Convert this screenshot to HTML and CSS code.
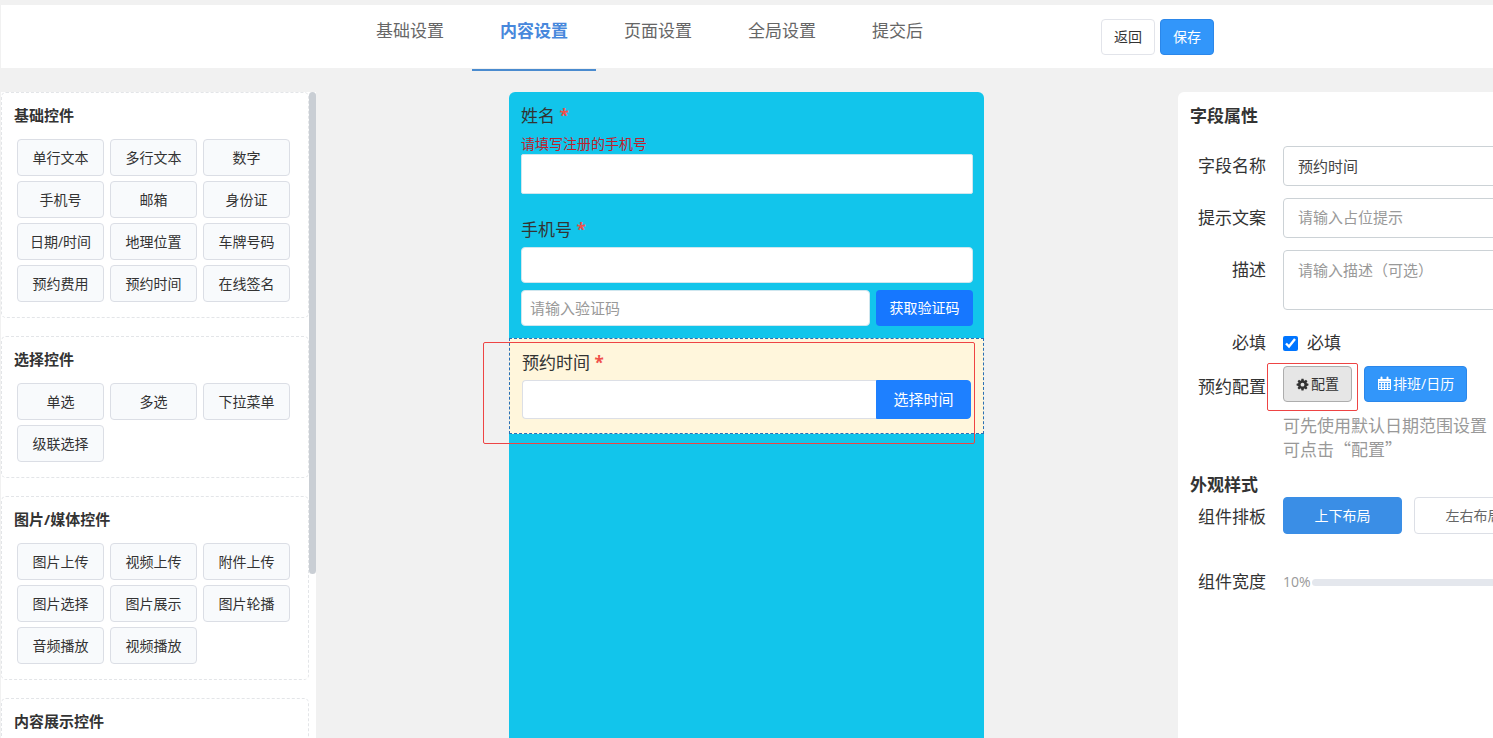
FILE: index.html
```html
<!DOCTYPE html>
<html lang="zh-CN">
<head>
<meta charset="utf-8">
<title>内容设置</title>
<link rel="stylesheet" href="styles.css">
</head>
<body>
<header class="topbar">
  <nav class="tabs">
    <a class="tab" href="#basic">基础设置</a>
    <a class="tab tab-active" href="#content">内容设置</a>
    <a class="tab" href="#page">页面设置</a>
    <a class="tab" href="#global">全局设置</a>
    <a class="tab" href="#after">提交后</a>
  </nav>
  <div class="actions">
    <button class="btn btn-plain" type="button">返回</button>
    <button class="btn btn-primary" type="button">保存</button>
  </div>
</header>
<main class="workspace">
  <aside class="palette">
    <section class="group">
      <h2 class="group-title">基础控件</h2>
      <div class="widgets">
        <button class="widget" type="button">单行文本</button>
        <button class="widget" type="button">多行文本</button>
        <button class="widget" type="button">数字</button>
        <button class="widget" type="button">手机号</button>
        <button class="widget" type="button">邮箱</button>
        <button class="widget" type="button">身份证</button>
        <button class="widget" type="button">日期/时间</button>
        <button class="widget" type="button">地理位置</button>
        <button class="widget" type="button">车牌号码</button>
        <button class="widget" type="button">预约费用</button>
        <button class="widget" type="button">预约时间</button>
        <button class="widget" type="button">在线签名</button>
      </div>
    </section>
    <section class="group">
      <h2 class="group-title">选择控件</h2>
      <div class="widgets">
        <button class="widget" type="button">单选</button>
        <button class="widget" type="button">多选</button>
        <button class="widget" type="button">下拉菜单</button>
        <button class="widget" type="button">级联选择</button>
      </div>
    </section>
    <section class="group">
      <h2 class="group-title">图片/媒体控件</h2>
      <div class="widgets">
        <button class="widget" type="button">图片上传</button>
        <button class="widget" type="button">视频上传</button>
        <button class="widget" type="button">附件上传</button>
        <button class="widget" type="button">图片选择</button>
        <button class="widget" type="button">图片展示</button>
        <button class="widget" type="button">图片轮播</button>
        <button class="widget" type="button">音频播放</button>
        <button class="widget" type="button">视频播放</button>
      </div>
    </section>
    <section class="group">
      <h2 class="group-title">内容展示控件</h2>
    </section>
    <div class="scroll-thumb"></div>
  </aside>

  <form class="canvas">
    <div class="field">
      <label class="field-label" for="name">姓名 <span class="star">*</span></label>
      <p class="field-tip">请填写注册的手机号</p>
      <input class="box box-tall" id="name" type="text">
    </div>
    <div class="field">
      <label class="field-label" for="phone">手机号 <span class="star">*</span></label>
      <input class="box box-phone" id="phone" type="text">
      <div class="code-row">
        <input class="box" type="text" placeholder="请输入验证码" aria-label="验证码">
        <button class="code-btn" type="button">获取验证码</button>
      </div>
    </div>
    <div class="field field-selected">
      <label class="field-label" for="time">预约时间 <span class="star">*</span></label>
      <div class="time-row">
        <input class="time-input" id="time" type="text">
        <button class="time-btn" type="button">选择时间</button>
      </div>
      <div class="mark mark-field"></div>
    </div>
  </form>

  <aside class="props">
    <form class="props-form">
      <h2 class="props-title">字段属性</h2>
      <div class="row">
        <label class="row-label" for="p-name">字段名称</label>
        <input class="prop-input" id="p-name" type="text" value="预约时间">
      </div>
      <div class="row">
        <label class="row-label" for="p-hint">提示文案</label>
        <input class="prop-input" id="p-hint" type="text" placeholder="请输入占位提示">
      </div>
      <div class="row">
        <label class="row-label" for="p-desc">描述</label>
        <textarea class="prop-input prop-area" id="p-desc" placeholder="请输入描述（可选）"></textarea>
      </div>
      <div class="row row-check">
        <span class="row-label">必填</span>
        <label class="check"><input class="check-box" type="checkbox" checked>必填</label>
      </div>
      <div class="row row-config">
        <span class="row-label">预约配置</span>
        <div>
          <div class="config-buttons">
            <span class="config-wrap">
              <button class="btn btn-config" type="button"><svg class="icon-gear" viewBox="0 0 16 16" aria-hidden="true"><path fill-rule="evenodd" d="M6.700 1h2.600l.4 2 .9.400 1.700-1.200 1.800 1.800-1.200 1.700.4.900 2 .4v2.300l-2 .4-.4.900 1.200 1.700-1.800 1.800-1.700-1.200-.9.400-.4 2H6.700l-.4-2-.9-.4-1.700 1.200-1.800-1.800 1.200-1.700-.4-.9-2-.4V7l2-.4.4-.9L1.900 4l1.800-1.800 1.700 1.200.9-.4zM8 5.800a2.400 2.400 0 1 0 0 4.800 2.400 2.400 0 0 0 0-4.800z"/></svg>配置</button>
              <span class="mark mark-config"></span>
            </span>
            <button class="btn btn-primary" type="button"><svg class="icon-cal" viewBox="0 0 15 15" aria-hidden="true"><path class="cal-body" d="M1.500 3.500h12v10h-12zM1.500 6.500h12M1.500 9h12M1.500 11.300h12M4.500 6.500v7M7.500 6.500v7M10.500 6.500v7"/><path class="cal-top" d="M1 3h13v2.500H1z"/><path class="cal-ring" d="M4.500 1.500v2M10.500 1.500v2"/></svg>排班/日历</button>
          </div>
          <p class="config-note">可先使用默认日期范围设置<br>可点击“配置”</p>
        </div>
      </div>
      <h2 class="props-title props-title-style">外观样式</h2>
      <div class="row row-layout">
        <span class="row-label">组件排板</span>
        <div class="layout-options">
          <button class="option option-active" type="button">上下布局</button>
          <button class="option" type="button">左右布局</button>
        </div>
      </div>
      <div class="row row-width">
        <span class="row-label">组件宽度</span>
        <div class="width-control"><span>10%</span><span class="track"></span></div>
      </div>
    </form>
  </aside>
</main>
</body>
</html>
```

FILE: styles.css
```css
* { box-sizing: border-box; }

body, button, input, textarea {
  font-family: "Open Sans", "Noto Sans CJK SC", sans-serif;
}

body {
  margin: 0;
  height: 100vh;
  display: flex;
  flex-direction: column;
  overflow: hidden;
  background: #f1f1f1;
  color: #333;
  font-size: 17px;
  line-height: 24px;
}

h2, p { margin: 0; }
button { cursor: pointer; }

/* Top bar */
.topbar {
  flex: 0 0 63px;
  min-height: 0;
  display: flex;
  align-items: flex-start;
  margin: 5px 0 0 1px;
  padding-left: 347px;
  background: #fff;
}
.tabs { display: flex; }
.tab {
  height: 66px;
  padding: 14px 28px 0;
  border-bottom: 2px solid transparent;
  color: #666;
  text-decoration: none;
}
.tab-active {
  border-color: #4a8bcf;
  color: #4788dc;
  font-weight: 700;
}
.actions {
  display: flex;
  gap: 5px;
  margin: 14px 0 0 150px;
}
.btn {
  height: 36px;
  padding: 0 12px 2px;
  border: 1px solid #e2e4ea;
  border-radius: 4px;
  background: #fff;
  color: #333;
  font-size: 14px;
}
.btn-primary {
  border-color: #2b87ea;
  background: #3296fa;
  color: #fff;
}

/* Three columns */
.workspace {
  flex: 1;
  min-height: 0;
  display: grid;
  grid-template-columns: 315px 475px 316px;
  justify-content: space-between;
  margin: 24px 0 0 1px;
}

/* Widget palette */
.palette {
  position: relative;
  overflow: hidden;
  padding-right: 7px;
  background: #fff;
}
.group {
  margin-bottom: 18px;
  padding: 10px 15px 15px;
  border: 1px dashed #e3e5e8;
  border-radius: 5px;
}
.group-title {
  margin: 0 -3px 12px;
  font-size: 15px;
  line-height: 24px;
}
.widgets {
  display: grid;
  grid-template-columns: repeat(3, 87px);
  gap: 5px 6px;
}
.widget {
  height: 37px;
  padding: 0 0 2px;
  border: 1px solid #dbdee5;
  border-radius: 4px;
  background: #f8fafc;
  color: #333;
  font-size: 14px;
}
.scroll-thumb {
  position: absolute;
  top: 0;
  right: 0;
  width: 7px;
  height: 482px;
  border-radius: 4px;
  background: #c9ced4;
}

/* Form preview */
.canvas {
  border-radius: 6px 6px 0 0;
  background: #12c5eb;
}
.field { padding: 12px 11px 12px 12px; }
.field-label { display: block; }
.star { color: #f0504a; font-weight: 700; }
.field-tip {
  margin-top: 6px;
  color: #c0202c;
  font-size: 14px;
  line-height: 20px;
}
.box {
  display: block;
  width: 100%;
  height: 36px;
  padding: 0 8px;
  border: 1px solid #cfe6ee;
  border-radius: 4px;
  background: #fff;
  font-size: 15px;
}
.box-tall { height: 40px; border-radius: 2px; }
.box-phone { margin: 5px 0 7px; }
.code-row { display: flex; gap: 6px; }
.code-btn {
  flex: 0 0 97px;
  padding: 0 0 2px;
  border: 0;
  border-radius: 4px;
  background: #1677ff;
  color: #fff;
  font-size: 14px;
}
.field-selected {
  position: relative;
  padding: 12px 12px 14px;
  border: 1px dashed #2a6fb5;
  background: #fff6dc;
}
.time-row { display: flex; margin-top: 5px; }
.time-input {
  flex: 1;
  min-width: 0;
  height: 39px;
  border: 1px solid #dcdfe6;
  border-right: 0;
  border-radius: 4px 0 0 4px;
  font-size: 15px;
}
.time-btn {
  flex: 0 0 95px;
  padding: 0 0 2px;
  border: 1px solid #1e80ff;
  border-radius: 0 4px 4px 0;
  background: #1e80ff;
  color: #fff;
  font-size: 15px;
}
::placeholder { color: #999; opacity: 1; }

/* Red highlight frames drawn over the content */
.mark {
  position: absolute;
  border: 1px solid #ee4444;
  border-radius: 2px;
  pointer-events: none;
}
.mark-field { inset: 3px 8px -11px -27px; }
.mark-config { inset: -3px -6px -9px -16px; }

/* Field properties */
.props {
  overflow: hidden;
  margin-left: 1px;
  border-radius: 6px 0 0 0;
  background: #fff;
}
.props-form {
  min-width: 360px;
  padding: 12px 0 12px 12px;
}
.props-title {
  margin-bottom: 18px;
  font-size: 17px;
  line-height: 24px;
}
.row {
  display: grid;
  grid-template-columns: 76px 1fr;
  gap: 17px;
  margin-bottom: 12px;
}
.row-label {
  padding-top: 8px;
  text-align: right;
}
.prop-input {
  width: 100%;
  height: 40px;
  padding: 0 14px 2px;
  border: 1px solid #ccd2d6;
  border-radius: 4px;
  background: #fff;
  color: #444;
  font-size: 15px;
}
.prop-area {
  display: block;
  height: 60px;
  padding: 7px 14px;
  line-height: 24px;
  resize: none;
}
.row-check {
  align-items: center;
  margin: 21px 0 11px;
}
.row-check .row-label { padding: 0; }
.check {
  display: flex;
  align-items: center;
  gap: 9px;
}
.check-box {
  width: 15px;
  height: 15px;
  margin: 0;
  accent-color: #0075ff;
}
.row-config .row-label { padding-top: 9px; }
.config-buttons { display: flex; gap: 12px; }
.config-wrap { position: relative; display: flex; }
.btn-config {
  border-color: #adadad;
  background: #e6e6e6;
}
.icon-gear {
  width: 13px;
  height: 13px;
  margin-right: 2px;
  fill: #333;
  vertical-align: -2px;
}
.icon-cal {
  width: 15px;
  height: 15px;
  margin-right: 1px;
  vertical-align: -2px;
}
.cal-body { fill: none; stroke: #fff; stroke-width: 1; }
.cal-top { fill: #fff; }
.cal-ring { fill: none; stroke: #fff; stroke-width: 2; stroke-linecap: round; }
.config-note {
  margin-top: 11px;
  color: #999;
  font-family: "Noto Sans CJK SC", sans-serif;
  white-space: nowrap;
}
.props-title-style { margin-bottom: 0; }
.row-layout { margin-bottom: 36px; }
.layout-options { display: flex; gap: 12px; }
.option {
  flex: 0 0 119px;
  height: 37px;
  padding: 0 0 2px;
  border: 1px solid #dcdfe6;
  border-radius: 4px;
  background: #fff;
  color: #666;
  font-size: 14px;
}
.option-active {
  border-color: #3a8ee6;
  background: #3a8ee6;
  color: #fff;
}
.row-width { align-items: center; }
.row-width .row-label { padding: 0; }
.width-control {
  display: flex;
  align-items: center;
  gap: 1px;
  color: #999;
  font-size: 14px;
}
.track {
  flex: 1;
  height: 7px;
  border-radius: 4px;
  background: #e4e7ed;
}
```
